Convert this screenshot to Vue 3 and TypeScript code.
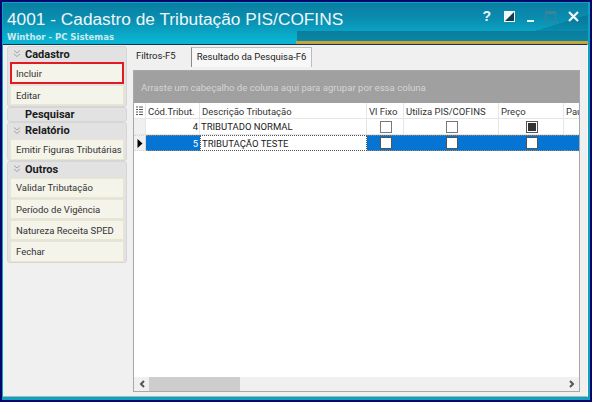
<script setup lang="ts">
interface Group {
  title: string
  collapsible: boolean
  items: { label: string; active?: boolean }[]
}

interface Row {
  code: number
  desc: string
  checks: boolean[]
  selected?: boolean
}

const groups: Group[] = [
  { title: 'Cadastro', collapsible: true, items: [{ label: 'Incluir', active: true }, { label: 'Editar' }] },
  { title: 'Pesquisar', collapsible: false, items: [] },
  { title: 'Relatório', collapsible: true, items: [{ label: 'Emitir Figuras Tributárias' }] },
  {
    title: 'Outros',
    collapsible: true,
    items: [
      { label: 'Validar Tributação' },
      { label: 'Período de Vigência' },
      { label: 'Natureza Receita SPED' },
      { label: 'Fechar' },
    ],
  },
]

const rows: Row[] = [
  { code: 4, desc: 'TRIBUTADO NORMAL', checks: [false, false, true] },
  { code: 5, desc: 'TRIBUTAÇÃO TESTE', checks: [false, false, false], selected: true },
]
</script>

<template>
  <div class="window">
    <header class="titlebar">
      <div class="titles">
        <div class="title">4001 - Cadastro de Tributação PIS/COFINS</div>
        <div class="subtitle">Winthor - PC Sistemas</div>
      </div>
      <div class="controls">
        <span class="help">?</span>
        <svg width="11" height="11" viewBox="0 0 11 11">
          <rect width="11" height="11" fill="#f4f8f8" />
          <path d="M1 10 L10 1 L10 10 Z" fill="#123f4e" />
        </svg>
        <svg class="ctl-min" width="8" height="11" viewBox="0 0 8 11">
          <rect y="9" width="7" height="2" fill="#e8f0f2" />
        </svg>
        <svg class="ctl-max" width="11" height="11" viewBox="0 0 11 11">
          <rect x="0.5" y="0.5" width="10" height="10" fill="none" stroke="#3f8297" />
          <rect width="11" height="3" fill="#3f8297" />
        </svg>
        <svg width="11" height="11" viewBox="0 0 11 11">
          <path d="M1 1 L10 10 M10 1 L1 10" stroke="#f4f8f8" stroke-width="2.2" />
        </svg>
      </div>
    </header>
    <div class="accent"></div>

    <div class="body">
      <aside class="sidebar">
        <section v-for="g in groups" :key="g.title" class="group">
          <div class="group-head">
            <svg v-if="g.collapsible" class="chev" width="8" height="8" viewBox="0 0 8 8">
              <path d="M1 0.5 L4 3 L7 0.5 M1 4 L4 6.5 L7 4" fill="none" stroke="#a5a5a5" />
            </svg>
            <span class="group-title">{{ g.title }}</span>
          </div>
          <button v-for="it in g.items" :key="it.label" class="item" :class="{ active: it.active }">
            {{ it.label }}
          </button>
        </section>
      </aside>

      <main class="main">
        <nav class="tabs">
          <span class="tab">Filtros-F5</span>
          <span class="tab current">Resultado da Pesquisa-F6</span>
        </nav>
        <div class="grid">
          <div class="group-panel">Arraste um cabeçalho de coluna aqui para agrupar por essa coluna</div>
          <div class="row header">
            <span class="cell ind">
              <svg width="7" height="9" viewBox="0 0 7 9">
                <path d="M0 1 H2 M3 1 H7 M0 3.5 H2 M3 3.5 H7 M0 6 H2 M3 6 H7 M0 8.5 H2 M3 8.5 H7" stroke="#555" />
              </svg>
            </span>
            <span class="cell code">Cód.Tribut.</span>
            <span class="cell desc">Descrição Tributação</span>
            <span class="cell fixo">Vl Fixo</span>
            <span class="cell pis">Utiliza PIS/COFINS</span>
            <span class="cell preco">Preço</span>
            <span class="cell pau">Pau</span>
          </div>
          <div v-for="r in rows" :key="r.code" class="row data" :class="{ selected: r.selected }">
            <span class="cell ind">
              <svg v-if="r.selected" width="6" height="9" viewBox="0 0 6 9">
                <path d="M0.5 0 L5.5 4.5 L0.5 9 Z" fill="#000" />
              </svg>
            </span>
            <span class="cell code num">{{ r.code }}</span>
            <span class="cell desc">{{ r.desc }}</span>
            <span class="cell fixo box"><i class="check" :class="{ on: r.checks[0] }"></i></span>
            <span class="cell pis box"><i class="check" :class="{ on: r.checks[1] }"></i></span>
            <span class="cell preco box"><i class="check" :class="{ on: r.checks[2] }"></i></span>
            <span class="cell pau"></span>
          </div>
          <div class="spacer"></div>
          <div class="scrollbar">
            <span class="arrow">
              <svg width="6" height="8" viewBox="0 0 6 8"><path d="M5 1 L2 4 L5 7" fill="none" stroke="#555" stroke-width="2" /></svg>
            </span>
            <span class="thumb"></span>
            <span class="track"></span>
            <span class="arrow">
              <svg width="6" height="8" viewBox="0 0 6 8"><path d="M1 1 L4 4 L1 7" fill="none" stroke="#555" stroke-width="2" /></svg>
            </span>
          </div>
        </div>
      </main>
    </div>
  </div>
</template>

<style scoped>
.window {
  width: 592px;
  height: 402px;
  box-sizing: border-box;
  border: 2px solid #06066e;
  background: #0aa5bd;
  padding: 1px 2px 3px 1px;
  display: flex;
  flex-direction: column;
  font-family: Roboto, "Noto Sans", sans-serif;
  color: #222;
  overflow: hidden;
}
.titlebar {
  height: 38px;
  flex: none;
  display: flex;
  justify-content: space-between;
  padding: 0 9px 0 4px;
  color: #fff;
  background:
    linear-gradient(#0a7d9e, #0a86a6) right bottom / 291px 10px no-repeat,
    linear-gradient(163deg, transparent 0 78%, rgba(0, 40, 70, 0.18) 78% 100%) right top / 150px 28px no-repeat,
    linear-gradient(180deg, #0a7ea2 0%, #0a8fb1 45%, #0ab4d2 100%);
}
.title {
  font-family: "Liberation Sans", Arial, sans-serif;
  font-size: 17.3px;
  line-height: 22px;
  margin-top: 5px;
  color: #eef7f9;
}
.subtitle {
  font-family: "DejaVu Sans", sans-serif;
  font-size: 8.5px;
  font-weight: 700;
  line-height: 10px;
  color: #cfe9ef;
  margin-top: 2px;
}
.controls {
  display: flex;
  align-items: flex-start;
  gap: 12px;
  padding-top: 8px;
}
.help {
  font-family: "Liberation Sans", sans-serif;
  font-weight: 700;
  font-size: 14px;
  line-height: 11px;
  color: #f0f6f8;
  margin-right: 1px;
}
.ctl-min {
  margin-right: -2px;
}
.accent {
  height: 3px;
  flex: none;
  background: linear-gradient(90deg, #0ab4d2 0 293px, #c9a33a 293px 100%);
}
.body {
  flex: 1;
  min-height: 0;
  display: flex;
  background: #f0f0f0;
  border-top: 1px solid #11364a;
  border-right: 1px solid #fff;
  border-bottom: 1px solid #aeb4b6;
}
.sidebar {
  width: 120px;
  flex: none;
  padding: 1px 3px 0 4px;
  display: flex;
  flex-direction: column;
}
.group {
  background: #e2e2e2;
  border: 1px solid #d6d6d6;
  border-radius: 3px;
  padding: 0 2px;
  display: flex;
  flex-direction: column;
  gap: 1px;
}
.group:first-child {
  padding-bottom: 1px;
}
.group-head {
  height: 14px;
  display: flex;
  align-items: center;
  padding-left: 3px;
}
.group:nth-child(2) .group-head {
  height: 13px;
}
.group:nth-child(n + 3) .group-head {
  height: 15px;
}
.chev {
  flex: none;
}
.group-title {
  font-size: 11px;
  font-weight: 700;
  color: #1b1b1b;
  position: absolute;
  margin-left: 12px;
}
.item {
  height: 20.3px;
  flex: none;
  padding: 0 0 0 5px;
  text-align: left;
  font-family: inherit;
  font-size: 9.5px;
  color: #333;
  background: #f5f4ea;
  border: 1px solid #e9e6cd;
  white-space: nowrap;
}
.item.active {
  height: 22px;
  border: 2px solid #e21a26;
  padding-left: 4px;
}
.main {
  flex: 1;
  min-width: 0;
  display: flex;
  flex-direction: column;
  padding: 2px 7px 4px 3px;
}
.tabs {
  height: 23px;
  flex: none;
  display: flex;
  align-items: stretch;
  gap: 6px;
  padding-left: 3px;
}
.tab {
  font-size: 9.5px;
  line-height: 17px;
  height: 19px;
}
.tab:first-child {
  padding-right: 8px;
}
.tab.current {
  width: 114px;
  padding: 0 0 0 5px;
  margin-left: 1px;
  line-height: 18px;
  background: #f7f7f7;
  border: 1px solid #bcbcbc;
  border-bottom: none;
  border-left-color: #8a8a8a;
}
.grid {
  flex: 1;
  min-height: 0;
  display: flex;
  flex-direction: column;
  background: #fff;
  border: 1px solid #a8a8a8;
  overflow: hidden;
}
.group-panel {
  height: 32px;
  flex: none;
  background: #a0a0a0;
  color: #d4d4d4;
  font-size: 9.6px;
  line-height: 34px;
  padding-left: 7px;
}
.row {
  display: flex;
  flex: none;
}
.header {
  height: 16px;
  font-size: 9.5px;
  line-height: 15px;
  color: #333;
}
.header .cell {
  padding-top: 1px;
}
.data {
  height: 16px;
  font-size: 9.5px;
  line-height: 16px;
  color: #222;
}
.cell {
  flex: none;
  box-sizing: border-box;
  border-right: 1px solid #e6e6e6;
  border-bottom: 1px solid #e6e6e6;
  padding: 0 1px 0 2px;
  white-space: nowrap;
  overflow: hidden;
}
.ind {
  width: 12px;
  padding: 0;
  display: flex;
  align-items: center;
  justify-content: center;
  background: #f0f0f0;
}
.header .ind {
  background: #fff;
  padding-top: 0;
}
.code {
  width: 54px;
}
.desc {
  width: 167px;
}
.data .desc {
  padding-left: 1px;
}
.fixo {
  width: 37px;
}
.pis {
  width: 95px;
}
.preco {
  width: 65px;
}
.pau {
  width: 30px;
  border-right: none;
}
.num {
  text-align: right;
}
.box {
  display: flex;
  align-items: center;
  justify-content: center;
}
.check {
  width: 12px;
  height: 12px;
  box-sizing: border-box;
  border: 1px solid #777;
  background: #fff;
  display: block;
}
.check.on {
  border-color: #555;
  box-shadow: inset 0 0 0 1px #fff, inset 0 0 0 5px #333;
}
.selected .cell {
  background: #0674d3;
  color: #fff;
  border-color: #0674d3;
  border-bottom: 1px dotted #9a8a70;
  border-top: 1px dotted #9a8a70;
}
.selected .ind {
  background: #f0f0f0;
  border-color: #d8d8d8;
}
.selected .desc {
  background: #fff;
  color: #222;
  border: 1px dotted #555;
}
.selected .check {
  border-color: #555;
}
.spacer {
  flex: 1;
  min-height: 0;
}
.scrollbar {
  height: 14px;
  flex: none;
  display: flex;
  background: #f0f0f0;
}
.arrow {
  width: 15px;
  flex: none;
  display: flex;
  align-items: center;
  justify-content: center;
}
.thumb {
  width: 91px;
  background: #cdcdcd;
}
.track {
  flex: 1;
}
</style>

<style>
html,
body {
  margin: 0;
  background: #06066e;
}
</style>
